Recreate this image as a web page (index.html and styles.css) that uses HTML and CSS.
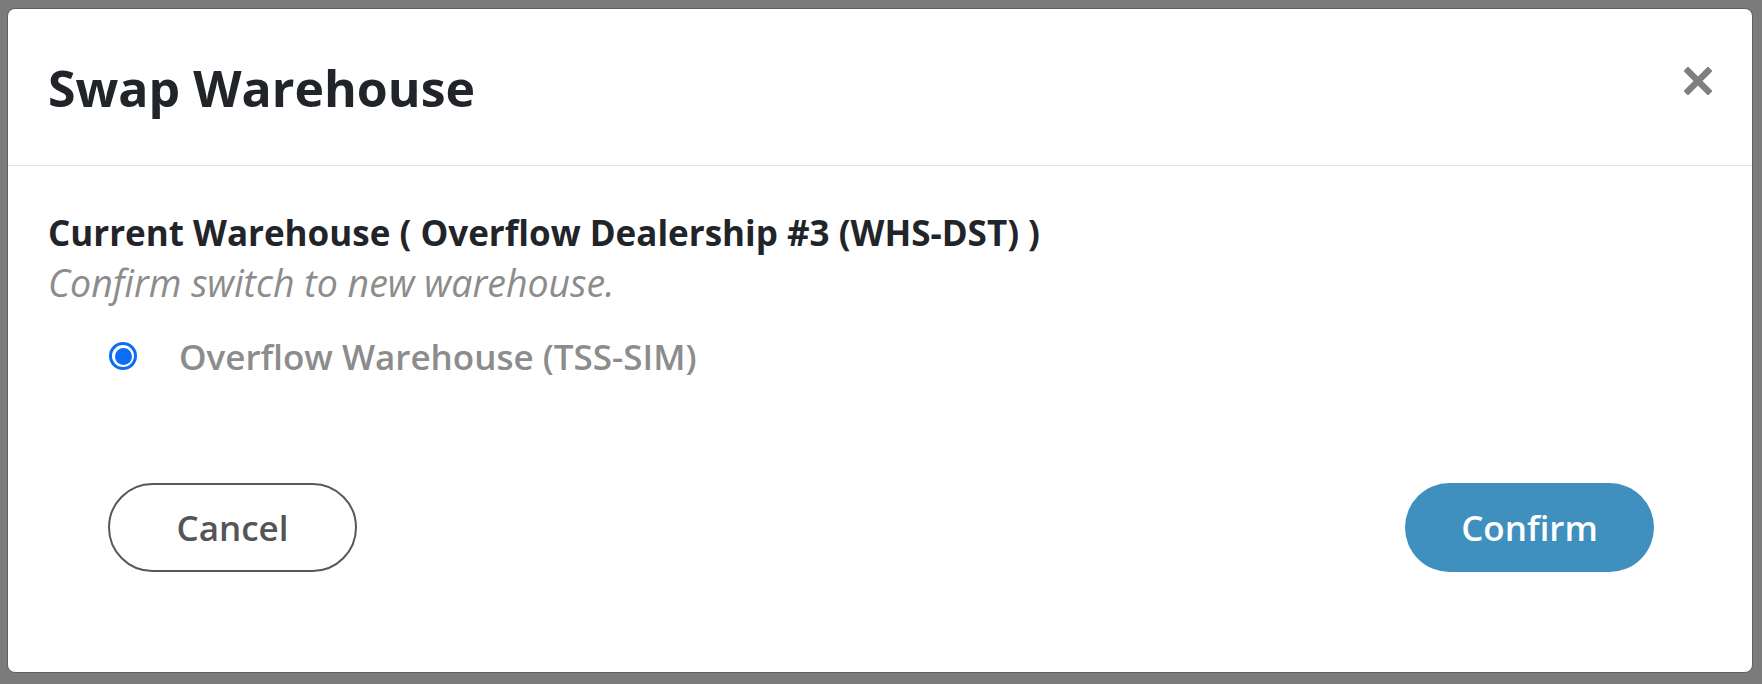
FILE: index.html
```html
<!DOCTYPE html>
<html lang="en">
<head>
<meta charset="utf-8">
<title>Swap Warehouse</title>
<link rel="stylesheet" href="styles.css">
</head>
<body>
<div class="modal">
  <div class="modal-header">
    <h1 class="modal-title">Swap Warehouse</h1>
    <button class="close" aria-label="Close">
      <svg width="28" height="28" viewBox="0 0 28 28"><path d="M4 4 L24 24 M24 4 L4 24" stroke="#7f7f7f" stroke-width="6.5" stroke-linecap="square" fill="none"/></svg>
    </button>
  </div>
  <div class="modal-body">
    <div class="current">Current Warehouse ( Overflow Dealership #3 (WHS-DST) )</div>
    <div class="hint">Confirm switch to new warehouse.</div>
    <label class="option">
      <span class="radio"><span class="dot"></span></span>
      <span class="option-label">Overflow Warehouse (TSS-SIM)</span>
    </label>
  </div>
  <div class="modal-footer">
    <button class="btn btn-cancel">Cancel</button>
    <button class="btn btn-confirm">Confirm</button>
  </div>
</div>
</body>
</html>
```
FILE: styles.css
```css
html, body {
  margin: 0;
  padding: 0;
}
body {
  background: #7b7b7b;
  width: 1762px;
  height: 684px;
  padding: 8px 0 0 7px;
  box-sizing: border-box;
  font-family: "Open Sans", "Noto Sans", sans-serif;
  overflow: hidden;
}
.modal {
  width: 1746px;
  height: 665px;
  box-sizing: border-box;
  background: #fff;
  border: 1px solid #5e5e5e;
  border-radius: 8px;
  display: flex;
  flex-direction: column;
}
.modal-header {
  display: flex;
  align-items: center;
  justify-content: space-between;
  padding: 49px 40px 47px 40px;
  border-bottom: 1px solid #dee2e6;
}
.modal-title {
  margin: 0;
  font-size: 50px;
  line-height: 60px;
  font-weight: 700;
  color: #212529;
}
.close {
  border: 0;
  background: none;
  padding: 0;
  width: 28px;
  height: 28px;
  display: flex;
  margin-top: -14px;
}
.modal-body {
  padding: 42px 40px 0 40px;
}
.current {
  font-size: 35px;
  line-height: 50px;
  font-weight: 700;
  color: #212529;
}
.hint {
  font-size: 37.5px;
  line-height: 50px;
  font-style: italic;
  color: #8c8c8c;
}
.option {
  display: flex;
  align-items: center;
  margin-top: 23px;
  padding-left: 61px;
  height: 50px;
}
.radio {
  width: 28px;
  height: 28px;
  box-sizing: border-box;
  border: 3px solid #0b6cf5;
  border-radius: 50%;
  display: flex;
  align-items: center;
  justify-content: center;
  margin-right: 42px;
}
.dot {
  width: 17px;
  height: 17px;
  border-radius: 50%;
  background: #0b6cf5;
}
.option-label {
  font-size: 35px;
  font-weight: 600;
  color: #8c8c8c;
}
.modal-footer {
  display: flex;
  justify-content: space-between;
  padding: 102px 98px 0 100px;
}
.btn {
  width: 249px;
  height: 89px;
  border-radius: 45px;
  font-family: "Open Sans", "Noto Sans", sans-serif;
  font-size: 35px;
  font-weight: 600;
  box-sizing: border-box;
  cursor: pointer;
}
.btn-cancel {
  background: #fff;
  border: 2px solid #585858;
  color: #555;
}
.btn-confirm {
  background: #3f8fbf;
  border: 0;
  color: #fff;
}
```
